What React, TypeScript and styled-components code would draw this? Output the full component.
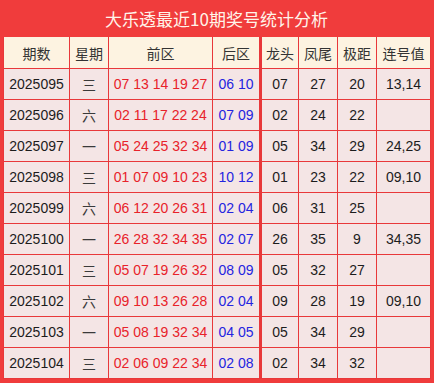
import styled, { createGlobalStyle } from 'styled-components'

const GlobalStyle = createGlobalStyle`
  html, body {
    margin: 0;
    padding: 0;
    background: #ffffff;
  }
`

const Panel = styled.div`
  width: 434px;
  box-sizing: border-box;
  background: #f03c3c;
  padding: 0 4px 4px 3px;
  font-family: 'Liberation Sans', 'Noto Sans CJK SC', sans-serif;
`

const Title = styled.div`
  height: 37px;
  line-height: 37px;
  text-align: center;
  color: #fff4ea;
  font-size: 17px;
  font-family: 'Noto Sans CJK SC', 'Liberation Sans', sans-serif;
`

const Table = styled.table`
  width: 427px;
  border-collapse: collapse;
  table-layout: fixed;
  font-size: 14px;
`

const HeadCell = styled.th<{ $split?: boolean }>`
  height: 31px;
  padding: 0;
  background: #fdf3e1;
  color: #333333;
  font-weight: normal;
  font-family: 'Noto Sans CJK SC', sans-serif;
  font-size: 14px;
  border: 1px solid #e8383a;
  border-top: none;
  border-right: ${(p) => (p.$split ? '3px solid #e8383a' : '1px solid #e8383a')};
  text-align: center;
`

const Cell = styled.td<{ $tone?: 'red' | 'blue' | 'week'; $split?: boolean }>`
  height: 30px;
  padding: 0;
  background: #f4e5e5;
  border: 1px solid #e8383a;
  border-right: ${(p) => (p.$split ? '3px solid #e8383a' : '1px solid #e8383a')};
  text-align: center;
  white-space: nowrap;
  color: ${(p) => (p.$tone === 'red' ? '#e8222a' : p.$tone === 'blue' ? '#2424e0' : p.$tone === 'week' ? '#3a3a3a' : '#1c1c1c')};
  font-family: ${(p) => (p.$tone === 'week' ? "'Noto Sans CJK SC', sans-serif" : "'Liberation Sans', sans-serif")};
`

const rows = [
  ['2025095', '三', '07 13 14 19 27', '06 10', '07', '27', '20', '13,14'],
  ['2025096', '六', '02 11 17 22 24', '07 09', '02', '24', '22', ''],
  ['2025097', '一', '05 24 25 32 34', '01 09', '05', '34', '29', '24,25'],
  ['2025098', '三', '01 07 09 10 23', '10 12', '01', '23', '22', '09,10'],
  ['2025099', '六', '06 12 20 26 31', '02 04', '06', '31', '25', ''],
  ['2025100', '一', '26 28 32 34 35', '02 07', '26', '35', '9', '34,35'],
  ['2025101', '三', '05 07 19 26 32', '08 09', '05', '32', '27', ''],
  ['2025102', '六', '09 10 13 26 28', '02 04', '09', '28', '19', '09,10'],
  ['2025103', '一', '05 08 19 32 34', '04 05', '05', '34', '29', ''],
  ['2025104', '三', '02 06 09 22 34', '02 08', '02', '34', '32', ''],
]

const widths = [66, 39, 104, 48, 38, 39, 39, 54]
const heads = ['期数', '星期', '前区', '后区', '龙头', '凤尾', '极距', '连号值']

export default function App() {
  return (
    <>
      <GlobalStyle />
      <Panel>
        <Title>大乐透最近10期奖号统计分析</Title>
        <Table>
          <colgroup>
            {widths.map((w, i) => (
              <col key={i} style={{ width: w }} />
            ))}
          </colgroup>
          <thead>
            <tr>
              {heads.map((h, i) => (
                <HeadCell key={h} $split={i === 3}>
                  {h}
                </HeadCell>
              ))}
            </tr>
          </thead>
          <tbody>
            {rows.map((r) => (
              <tr key={r[0]}>
                <Cell>{r[0]}</Cell>
                <Cell $tone="week">{r[1]}</Cell>
                <Cell $tone="red">{r[2]}</Cell>
                <Cell $tone="blue" $split>
                  {r[3]}
                </Cell>
                <Cell>{r[4]}</Cell>
                <Cell>{r[5]}</Cell>
                <Cell>{r[6]}</Cell>
                <Cell>{r[7]}</Cell>
              </tr>
            ))}
          </tbody>
        </Table>
      </Panel>
    </>
  )
}
